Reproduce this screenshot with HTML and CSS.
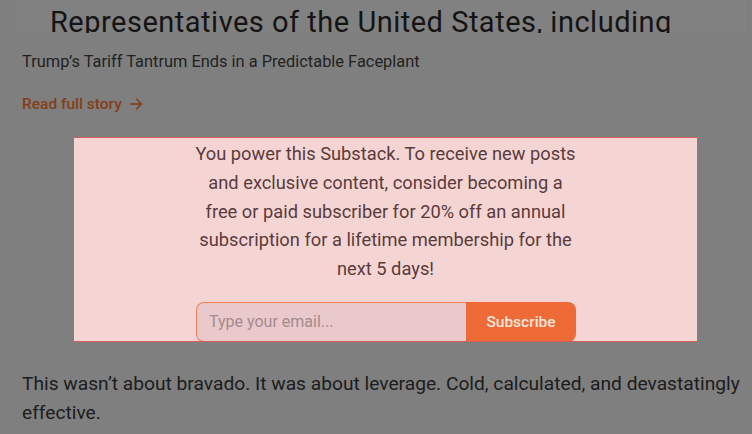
FILE: index.html
```html
<!DOCTYPE html>
<html lang="en">
<head>
    <meta charset="UTF-8">
    <meta name="viewport" content="width=device-width, initial-scale=1.0">
    <title>Trump's Tariff Tantrum</title>
    <link rel="stylesheet" href="styles.css">
</head>
<body>
    <div class="page">
        <div class="embed-frame">
            <h1 class="embed-title">Representatives of the United States, including</h1>
        </div>

        <p class="caption">Trump’s Tariff Tantrum Ends in a Predictable Faceplant</p>

        <a class="read-more" href="#">Read full story
            <svg width="14" height="14" viewBox="0 0 14 14" fill="none" stroke="currentColor" stroke-width="1.5" stroke-linecap="round" stroke-linejoin="round">
                <path d="M1.5 7h11M7.5 2l5 5-5 5"/>
            </svg>
        </a>

        <div class="subscribe-box">
            <p class="subscribe-text">You power this Substack. To receive new posts and exclusive content, consider becoming a free or paid subscriber for 20% off an annual subscription for a lifetime membership for the next 5 days!</p>
            <form class="subscribe-form">
                <input type="email" class="email-input" placeholder="Type your email...">
                <button type="submit" class="subscribe-button">Subscribe</button>
            </form>
        </div>

        <p class="body-text">This wasn’t about bravado. It was about leverage. Cold, calculated, and devastatingly effective.</p>
    </div>
</body>
</html>
```

FILE: styles.css
```css
body {
    margin: 0;
    background-color: #7f7f7f;
    font-family: Roboto, "Noto Sans", sans-serif;
    overflow: hidden;
}

.page {
    width: 752px;
    height: 434px;
}

.embed-frame {
    margin-left: 15px;
    width: 731px;
    height: 33px;
    overflow: hidden;
    background-color: #818181;
}

.embed-title {
    margin: 3px 0 0 35px;
    font-size: 29px;
    line-height: 38px;
    font-weight: 400;
    color: #141414;
    white-space: nowrap;
    letter-spacing: 0.5px;
}

.caption {
    margin: 18px 0 0 22px;
    font-size: 16.4px;
    line-height: 22px;
    color: #1f1f1f;
}

.read-more {
    display: inline-flex;
    align-items: center;
    gap: 7px;
    margin: 20px 0 0 22px;
    font-size: 15.5px;
    line-height: 22px;
    font-weight: 500;
    color: #853d18;
    text-decoration: none;
}

.subscribe-box {
    box-sizing: border-box;
    margin: 22px 0 0 73px;
    width: 625px;
    height: 205px;
    border: 1px solid #d65e58;
    background-color: #f5d5d4;
    overflow: hidden;
}

.subscribe-text {
    width: 388px;
    margin: 2px auto 0;
    text-align: center;
    font-size: 18.3px;
    line-height: 28.8px;
    color: #5a3b3b;
}

.subscribe-form {
    display: flex;
    width: 380px;
    height: 40px;
    margin: 18px auto 0 122px;
}

.email-input {
    flex: 1;
    box-sizing: border-box;
    height: 40px;
    padding: 0 12px;
    border: 1px solid #ec8058;
    border-right: none;
    border-radius: 8px 0 0 8px;
    background-color: #e9c9cb;
    font-family: inherit;
    font-size: 16px;
    color: #5a3b3b;
    outline: none;
}

.email-input::placeholder {
    color: #a68a8c;
}

.subscribe-button {
    width: 110px;
    height: 40px;
    border: none;
    border-radius: 0 8px 8px 0;
    background-color: #ee6a37;
    color: #fbe5dc;
    font-family: inherit;
    font-size: 15.5px;
    font-weight: 500;
    cursor: pointer;
}

.body-text {
    margin: 27px 0 0 22px;
    font-size: 19.2px;
    line-height: 29px;
    color: #1c1c1c;
}
```
